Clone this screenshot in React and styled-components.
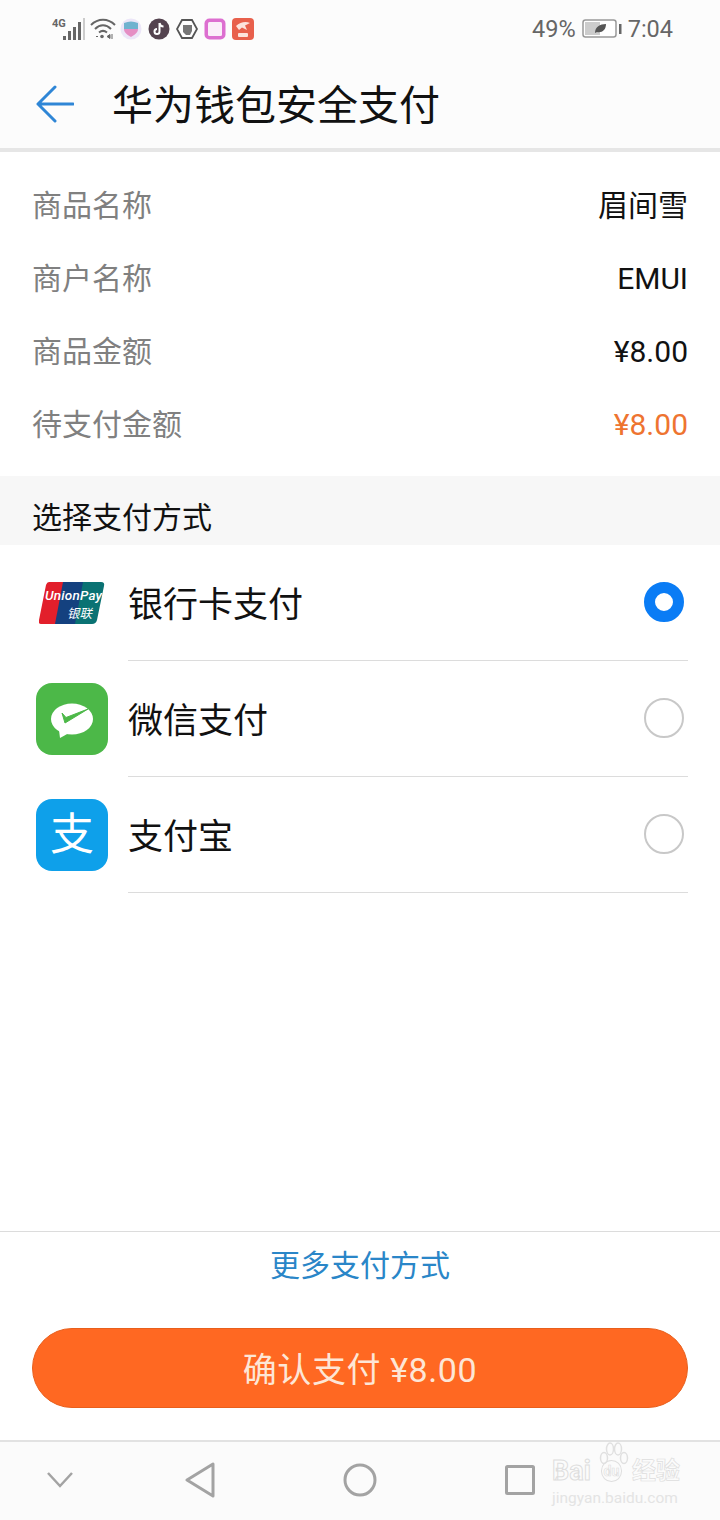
import React from 'react';
import styled, { createGlobalStyle } from 'styled-components';

const GlobalStyle = createGlobalStyle`
  html, body {
    margin: 0;
    padding: 0;
    background: #fff;
  }
  * {
    box-sizing: border-box;
  }
`;

const FONT = `Roboto, "Noto Sans CJK SC", sans-serif`;

const Page = styled.div`
  position: relative;
  width: 720px;
  height: 1520px;
  display: flex;
  flex-direction: column;
  overflow: hidden;
  background: #fff;
  font-family: ${FONT};
`;

const TopArea = styled.div`
  background: #fcfcfc;
  border-bottom: 4px solid #e6e6e6;
`;

const StatusBar = styled.div`
  height: 60px;
  display: flex;
  align-items: center;
  justify-content: space-between;
  padding: 0 47px 3px 52px;
  color: #666;
`;

const StatusGroup = styled.div`
  display: flex;
  align-items: center;
  gap: ${props => props.gap || 6}px;
`;

const StatusText = styled.span`
  font-size: 23.5px;
  line-height: 30px;
  color: #666;
`;

const Header = styled.div`
  height: 88px;
  display: flex;
  align-items: center;
  padding: 0 0 0 36px;
`;

const HeaderTitle = styled.h1`
  margin: 4px 0 0 38px;
  font-size: 41px;
  line-height: 56px;
  font-weight: 400;
  color: #111;
`;

const InfoList = styled.div`
  padding: 17px 32px 15px 32px;
`;

const InfoRow = styled.div`
  height: 73px;
  display: flex;
  align-items: center;
  justify-content: space-between;
  font-size: 30px;
`;

const InfoLabel = styled.span`
  color: #808080;
  margin-bottom: 5px;
`;

const InfoValue = styled.span`
  color: ${props => props.accent ? '#ee7430' : '#111'};
  margin-bottom: ${props => props.cjk ? 5 : 0}px;
`;

const SectionTitle = styled.div`
  height: 69px;
  padding: 24px 32px 0;
  background: #f7f7f7;
  font-size: 30px;
  line-height: 36px;
  color: #111;
`;

const MethodRow = styled.div`
  height: 116px;
  display: flex;
  align-items: stretch;
  padding: 0 32px 0 36px;
`;

const MethodIcon = styled.div`
  width: 72px;
  flex: none;
  display: flex;
  align-items: center;
  justify-content: center;
  margin-right: 20px;
`;

const MethodBody = styled.div`
  flex: 1;
  display: flex;
  align-items: center;
  justify-content: space-between;
  padding-right: 4px;
  border-bottom: 1px solid #dcdcdc;
`;

const MethodName = styled.span`
  font-size: 35px;
  margin-bottom: 2px;
  color: #111;
`;

const Radio = styled.span`
  width: 40px;
  height: 40px;
  margin-bottom: 2px;
  border-radius: 50%;
  border: ${props => props.checked ? '11px solid #0a7cf5' : '2px solid #c8c8c8'};
  background: #fff;
`;

const AppSquare = styled.div`
  width: 72px;
  height: 72px;
  border-radius: 16px;
  background: ${props => props.color};
  display: flex;
  align-items: center;
  justify-content: center;
`;

const AlipayGlyph = styled.span`
  font-size: 44px;
  line-height: 44px;
  color: #fff;
  font-weight: 400;
`;

const Spacer = styled.div`
  flex: 1;
`;

const Footer = styled.div`
  border-top: 1px solid #dcdcdc;
  padding: 0 32px 32px;
  display: flex;
  flex-direction: column;
  align-items: center;
`;

const MoreLink = styled.a`
  height: 66px;
  padding-bottom: 5px;
  display: flex;
  align-items: center;
  font-size: 30px;
  color: #2a86c8;
`;

const PayButton = styled.button`
  margin-top: 30px;
  width: 100%;
  height: 80px;
  padding-bottom: 3px;
  border: 1px solid #e85f1c;
  border-radius: 40px;
  background: #ff6822;
  color: #fde6d6;
  font-family: ${FONT};
  font-size: 34px;
  letter-spacing: 0.6px;
`;

const NavBar = styled.div`
  height: 80px;
  padding-bottom: 2px;
  display: grid;
  grid-template-columns: 120px 160px 160px 160px;
  align-items: center;
  justify-items: center;
  background: #fbfbfb;
  border-top: 2px solid #e2e2e2;
`;

const Watermark = styled.div`
  position: absolute;
  left: 552px;
  top: 1442px;
  width: 128px;
  display: flex;
  flex-direction: column;
  align-items: stretch;
`;

const WatermarkLogo = styled.div`
  display: flex;
  align-items: center;
  justify-content: space-between;
  margin-top: 15px;
  font-size: 27px;
  line-height: 28px;
  font-weight: 700;
  white-space: nowrap;
  color: transparent;
  -webkit-text-stroke: 1px #dedede;
`;

const WatermarkBadge = styled.span`
  font-size: 14px;
  line-height: 20px;
  padding: 0 2px;
  border: 1px solid #dedede;
  border-radius: 50%;
  -webkit-text-stroke: 0.6px #dedede;
`;

const WatermarkHan = styled.span`
  font-size: 24px;
  -webkit-text-stroke: 0.7px #dedede;
`;

const WatermarkUrl = styled.div`
  font-size: 15.5px;
  line-height: 20px;
  margin-top: 3px;
  white-space: nowrap;
  color: #e4e4e4;
`;

const Paw = styled.svg`
  position: absolute;
  left: 47px;
  top: 0;
`;

function SignalIcon() {
  return (
    <svg width="34" height="26" viewBox="0 0 34 26">
      <text x="0" y="11" fontSize="11" fontWeight="700" fontFamily="Roboto, sans-serif" fill="#666">4G</text>
      <rect x="11" y="20" width="3" height="4" fill="#666" />
      <rect x="16" y="15" width="3" height="9" fill="#666" />
      <rect x="21" y="11" width="3" height="13" fill="#666" />
      <rect x="26" y="6" width="3" height="18" fill="#666" />
      <rect x="31" y="2" width="2" height="22" fill="#ccc" />
    </svg>
  );
}

function WifiIcon() {
  return (
    <svg width="26" height="24" viewBox="0 0 26 24" fill="none" stroke="#666" strokeWidth="2">
      <path d="M1 8 C8 1 18 1 25 8" />
      <path d="M5 12 C10 7 16 7 21 12" />
      <path d="M9 15.500 C11.500 13.500 14.500 13.500 17 15.500" />
      <circle cx="12" cy="19.500" r="1.800" fill="#666" stroke="none" />
      <path d="M6 19.500 h2 M17 19.500 l3 -2 v4 z M22 17 v5" strokeWidth="1" fill="#666" />
    </svg>
  );
}

function HeartIcon() {
  return (
    <svg width="22" height="22" viewBox="0 0 22 22">
      <circle cx="11" cy="11" r="10.500" fill="#ece6f8" />
      <path d="M4 5 Q11 2 18 5 V11 H4 Z" fill="#6fb2cf" />
      <path d="M4 11 H18 C18 15 14 17 11 19 C8 17 4 15 4 11 Z" fill="#e58ec4" />
    </svg>
  );
}

function TiktokIcon() {
  return (
    <svg width="22" height="22" viewBox="0 0 22 22">
      <circle cx="11" cy="11" r="10.500" fill="#54434f" />
      <path d="M11.500 5 V13.500 A2.500 2.500 0 1 1 9 11 M11.500 5 C12 7.500 13.500 8.500 15.500 8.500" fill="none" stroke="#fff" strokeWidth="2" />
    </svg>
  );
}

function HandIcon() {
  return (
    <svg width="22" height="22" viewBox="0 0 22 22">
      <path d="M6 2 H16 L21 11 L16 20 H6 L1 11 Z" fill="#fff" stroke="#555" strokeWidth="1.800" />
      <path d="M7 8 V14 L10 17 H14 L16 13 V7 H7 Z" fill="#777" />
    </svg>
  );
}

function PinkBookIcon() {
  return (
    <svg width="22" height="22" viewBox="0 0 22 22">
      <rect x="0.500" y="0.500" width="21" height="21" rx="5" fill="#dd6fd0" />
      <rect x="4" y="4" width="14" height="14" rx="1.500" fill="#fbeef9" />
    </svg>
  );
}

function RedAppIcon() {
  return (
    <svg width="22" height="22" viewBox="0 0 22 22">
      <rect width="22" height="22" rx="4" fill="#e8604c" />
      <path d="M4 8 C8 4 14 3 18 5 L13 7.500 L15 12 L10 9.500 L7 12 Z" fill="#fde3dc" />
      <rect x="6" y="15" width="10" height="4" rx="1" fill="#fde3dc" />
    </svg>
  );
}

function BatteryIcon() {
  return (
    <svg width="40" height="20" viewBox="0 0 40 20">
      <rect x="1" y="1" width="33" height="17" rx="2.500" fill="#fff" stroke="#999" strokeWidth="1.500" />
      <rect x="3" y="3" width="15" height="13" fill="#ccc" />
      <path d="M13 14 C13 8 18 5 24 5 C24 11 20 14 15 13 Z" fill="#555" />
      <rect x="37" y="5" width="2.500" height="10" fill="#666" />
    </svg>
  );
}

function BackArrow() {
  return (
    <svg width="38" height="38" viewBox="0 0 38 38" fill="none" stroke="#2f86d6" strokeWidth="3" strokeLinecap="round" strokeLinejoin="round">
      <path d="M37 19 H2 M19 2 L2 19 L19 36" />
    </svg>
  );
}

function UnionPayLogo() {
  return (
    <svg width="66" height="42" viewBox="0 0 66 42">
      <path d="M10 0 H30 L22 42 H2 Q-1 42 0 38 L7 3 Q8 0 10 0 Z" fill="#e21f2b" />
      <path d="M24 0 H48 L40 42 H16 Z" fill="#14417f" />
      <path d="M44 0 H62 Q66 0 65 4 L58 38 Q57 42 53 42 H36 Z" fill="#0a7273" />
      <text x="6" y="18" fontSize="13.500" fontStyle="italic" fontWeight="500" fontFamily="Roboto, sans-serif" fill="#fff" letterSpacing="0.200">UnionPay</text>
      <text x="28" y="36" fontSize="12.500" fontStyle="italic" fontFamily="'Noto Sans CJK SC', sans-serif" fill="#fff">银联</text>
    </svg>
  );
}

function WechatMark() {
  return (
    <svg width="42" height="42" viewBox="0 0 42 42">
      <ellipse cx="21" cy="21" rx="21" ry="15.500" fill="#fff" />
      <path d="M8 32 L9 40 L18 35 Z" fill="#fff" />
      <path d="M11 15 L14 25 L37 11 L15 19.500 Z" fill="#4cb848" stroke="#4cb848" strokeWidth="1" strokeLinejoin="round" />
    </svg>
  );
}

function NavChevron() {
  return (
    <svg width="28" height="18" viewBox="0 0 28 18" fill="none" stroke="#a3a3a3" strokeWidth="2.500">
      <path d="M2 2 L14 15 L26 2" />
    </svg>
  );
}

function NavBack() {
  return (
    <svg width="30" height="36" viewBox="0 0 30 36" fill="none" stroke="#a3a3a3" strokeWidth="3" strokeLinejoin="round">
      <path d="M28 2 V34 L2 18 Z" />
    </svg>
  );
}

function NavHome() {
  return (
    <svg width="34" height="34" viewBox="0 0 34 34" fill="none" stroke="#a3a3a3" strokeWidth="3">
      <circle cx="17" cy="17" r="15" />
    </svg>
  );
}

function NavRecent() {
  return (
    <svg width="30" height="30" viewBox="0 0 30 30" fill="none" stroke="#a3a3a3" strokeWidth="3">
      <rect x="1.500" y="1.500" width="27" height="27" rx="1" />
    </svg>
  );
}

const INFO_ROWS = [
  { label: '商品名称', value: '眉间雪', cjk: true },
  { label: '商户名称', value: 'EMUI' },
  { label: '商品金额', value: '¥8.00' },
  { label: '待支付金额', value: '¥8.00', accent: true },
];

const METHODS = [
  { name: '银行卡支付', icon: <UnionPayLogo />, checked: true },
  {
    name: '微信支付',
    icon: <AppSquare color="#4cb848"><WechatMark /></AppSquare>,
  },
  {
    name: '支付宝',
    icon: <AppSquare color="#0ea0ea"><AlipayGlyph>支</AlipayGlyph></AppSquare>,
  },
];

export default function App() {
  return (
    <Page>
      <GlobalStyle />
      <TopArea>
        <StatusBar>
          <StatusGroup gap={4}>
            <SignalIcon />
            <WifiIcon />
            <StatusGroup gap={6}>
              <HeartIcon />
              <TiktokIcon />
              <HandIcon />
              <PinkBookIcon />
              <RedAppIcon />
            </StatusGroup>
          </StatusGroup>
          <StatusGroup gap={6}>
            <StatusText>49%</StatusText>
            <BatteryIcon />
            <StatusText>7:04</StatusText>
          </StatusGroup>
        </StatusBar>
        <Header>
          <BackArrow />
          <HeaderTitle>华为钱包安全支付</HeaderTitle>
        </Header>
      </TopArea>

      <InfoList>
        {INFO_ROWS.map((row) => (
          <InfoRow key={row.label}>
            <InfoLabel>{row.label}</InfoLabel>
            <InfoValue accent={row.accent} cjk={row.cjk}>{row.value}</InfoValue>
          </InfoRow>
        ))}
      </InfoList>

      <SectionTitle>选择支付方式</SectionTitle>
      {METHODS.map((method) => (
        <MethodRow key={method.name}>
          <MethodIcon>{method.icon}</MethodIcon>
          <MethodBody>
            <MethodName>{method.name}</MethodName>
            <Radio checked={method.checked} />
          </MethodBody>
        </MethodRow>
      ))}

      <Spacer />

      <Footer>
        <MoreLink>更多支付方式</MoreLink>
        <PayButton>确认支付 ¥8.00</PayButton>
      </Footer>

      <NavBar>
        <NavChevron />
        <NavBack />
        <NavHome />
        <NavRecent />
      </NavBar>

      <Watermark>
        <Paw width="30" height="26" viewBox="0 0 30 26" fill="none" stroke="#e0e0e0" strokeWidth="1.500">
          <ellipse cx="5" cy="16" rx="3.500" ry="5.500" />
          <ellipse cx="11" cy="7" rx="3.500" ry="6" />
          <ellipse cx="19" cy="7" rx="3.500" ry="6" />
          <ellipse cx="25" cy="16" rx="3.500" ry="5.500" />
        </Paw>
        <WatermarkLogo>
          <span>Bai</span>
          <WatermarkBadge>du</WatermarkBadge>
          <WatermarkHan>经验</WatermarkHan>
        </WatermarkLogo>
        <WatermarkUrl>jingyan.baidu.com</WatermarkUrl>
      </Watermark>
    </Page>
  );
}
